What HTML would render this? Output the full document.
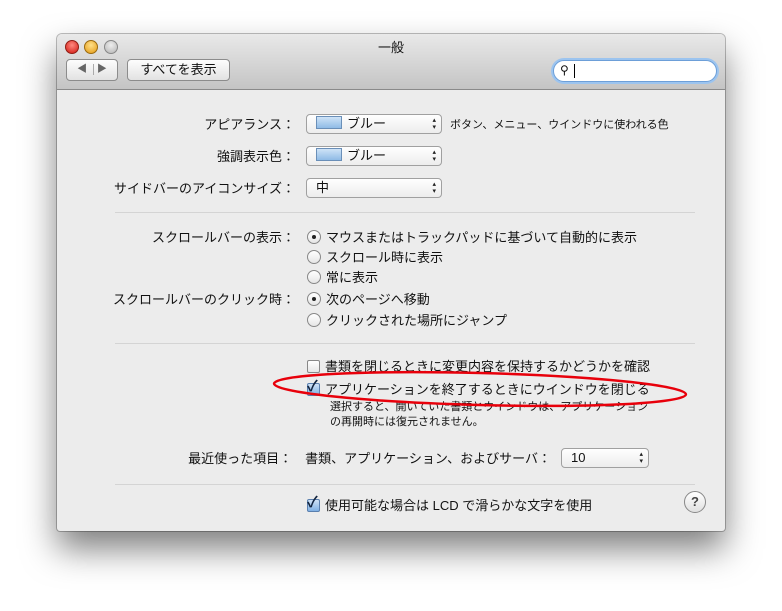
<!DOCTYPE html>
<html><head><meta charset="utf-8"><style>
body{margin:0;width:782px;height:611px;background:#fff;font-family:"Liberation Sans","Noto Sans CJK JP",sans-serif;font-size:13px;color:#111;position:relative;overflow:hidden}
.win{position:absolute;left:57px;top:34px;width:668px;height:497px;background:#ececec;border-radius:5px 5px 3px 3px;box-shadow:0 18px 34px rgba(0,0,0,.5),0 0 0 1px rgba(0,0,0,.25)}
.tb{position:absolute;left:0;top:0;width:668px;height:55px;border-radius:5px 5px 0 0;background:linear-gradient(#e9e9e9,#c4c4c4);border-bottom:1px solid #8a8a8a}
.a{position:absolute;white-space:nowrap}
.t{margin-top:-2px}
.dot{position:absolute;width:12px;height:12px;border-radius:50%;top:6px}
.btn{position:absolute;border:1px solid #8c8c8c;border-radius:4px;background:linear-gradient(#fdfdfd,#e2e2e2);box-sizing:border-box;text-align:center}
.pop{position:absolute;height:20px;border:1px solid #a0a0a0;border-radius:4px;background:linear-gradient(#fff,#ededed);box-sizing:border-box;line-height:17px;padding-left:9px}
.pop:after{content:"▴\A▾";white-space:pre;position:absolute;right:5px;top:2px;font-size:7px;line-height:7px;color:#222}
.sw{display:inline-block;width:24px;height:11px;background:linear-gradient(#cfe3f7,#8fbbe6);border:1px solid #6a8fb8;vertical-align:-1px;margin-right:5px}
.r{position:absolute;width:14px;height:14px;border-radius:50%;border:1px solid #888;background:linear-gradient(#fff,#e6e6e6);box-sizing:border-box}
.r.on:after{content:"";position:absolute;left:4px;top:4px;width:4px;height:4px;border-radius:50%;background:#222}
.c{position:absolute;width:13px;height:13px;border:1px solid #888;border-radius:2px;background:linear-gradient(#fff,#e6e6e6);box-sizing:border-box}
.c.on{background:linear-gradient(#cfe2f6,#7fb0e4);border-color:#5a7fae}
.sep{position:absolute;height:1px;background:#d4d4d4;left:58px;width:580px}
.lab{position:absolute;right:430px;white-space:nowrap;margin-top:-2px}
</style></head><body>
<div class="win">
<div class="tb">
<div class="dot" style="left:8px;background:radial-gradient(circle at 50% 35%,#ff8a80,#d0160f);border:1px solid #8f1d14"></div>
<div class="dot" style="left:27px;background:radial-gradient(circle at 50% 35%,#ffe08a,#e49a12);border:1px solid #9a6a10"></div>
<div class="dot" style="left:47px;background:radial-gradient(circle at 50% 35%,#eee,#b4b4b4);border:1px solid #888"></div>
<div class="a" style="left:0;width:668px;text-align:center;top:3px">一般</div>
<div class="btn" style="left:9px;top:25px;width:52px;height:22px;font-size:10px;color:#666;line-height:20px">◀ <span style="border-left:1px solid #aaa;margin:0 3px"></span> ▶</div>
<div class="btn" style="left:70px;top:25px;width:103px;height:22px;line-height:19px">すべてを表示</div>
<div class="a" style="left:496px;top:26px;width:162px;height:20px;border:1px solid #6d9fd8;border-radius:11px;background:#fff;box-shadow:0 0 0 2px #9cc4ef"><span style="position:absolute;left:6px;top:2px;font-size:12px">⚲</span><span style="position:absolute;left:20px;top:3px;width:1px;height:14px;background:#000"></span></div>
</div>
<div class="lab" style="top:82px">アピアランス：</div>
<div class="pop" style="left:249px;top:80px;width:136px"><span class="sw"></span>ブルー</div>
<div class="a t" style="left:393px;top:84px;font-size:11px">ボタン、メニュー、ウインドウに使われる色</div>
<div class="lab" style="top:114px">強調表示色：</div>
<div class="pop" style="left:249px;top:112px;width:136px"><span class="sw"></span>ブルー</div>
<div class="lab" style="top:146px">サイドバーのアイコンサイズ：</div>
<div class="pop" style="left:249px;top:144px;width:136px">中</div>
<div class="sep" style="top:178px"></div>
<div class="lab" style="top:195px">スクロールバーの表示：</div>
<div class="r on" style="left:250px;top:196px"></div><div class="a t" style="left:269px;top:195px">マウスまたはトラックパッドに基づいて自動的に表示</div>
<div class="r" style="left:250px;top:216px"></div><div class="a t" style="left:269px;top:215px">スクロール時に表示</div>
<div class="r" style="left:250px;top:236px"></div><div class="a t" style="left:269px;top:235px">常に表示</div>
<div class="lab" style="top:257px">スクロールバーのクリック時：</div>
<div class="r on" style="left:250px;top:258px"></div><div class="a t" style="left:269px;top:257px">次のページへ移動</div>
<div class="r" style="left:250px;top:279px"></div><div class="a t" style="left:269px;top:278px">クリックされた場所にジャンプ</div>
<div class="sep" style="top:309px"></div>
<div class="c" style="left:250px;top:326px"></div><div class="a t" style="left:268px;top:324px">書類を閉じるときに変更内容を保持するかどうかを確認</div>
<div class="c on" style="left:250px;top:349px"></div><div class="a" style="left:250px;top:341px;font-size:15px;color:#12243f;font-weight:bold">✓</div><div class="a t" style="left:268px;top:347px">アプリケーションを終了するときにウインドウを閉じる</div>
<div class="a t" style="left:273px;top:368px;font-size:11px;line-height:15px">選択すると、開いていた書類とウインドウは、アプリケーション<br>の再開時には復元されません。</div>
<div class="lab" style="top:416px;right:174px">最近使った項目：　書類、アプリケーション、およびサーバ：</div>
<div class="pop" style="left:504px;top:414px;width:88px">10</div>
<div class="sep" style="top:450px"></div>
<div class="c on" style="left:250px;top:465px"></div><div class="a" style="left:250px;top:457px;font-size:15px;color:#12243f;font-weight:bold">✓</div><div class="a t" style="left:268px;top:463px">使用可能な場合は LCD で滑らかな文字を使用</div>
<div class="a" style="left:627px;top:457px;width:20px;height:20px;border-radius:50%;border:1px solid #888;background:linear-gradient(#fff,#e0e0e0);text-align:center;line-height:20px;font-weight:bold;color:#444">?</div>
</div>
<svg style="position:absolute;left:0;top:0" width="782" height="611"><ellipse cx="480" cy="389" rx="206" ry="16" fill="none" stroke="#e8000b" stroke-width="2.5" transform="rotate(1.5 480 389)"/></svg>
</body></html>
